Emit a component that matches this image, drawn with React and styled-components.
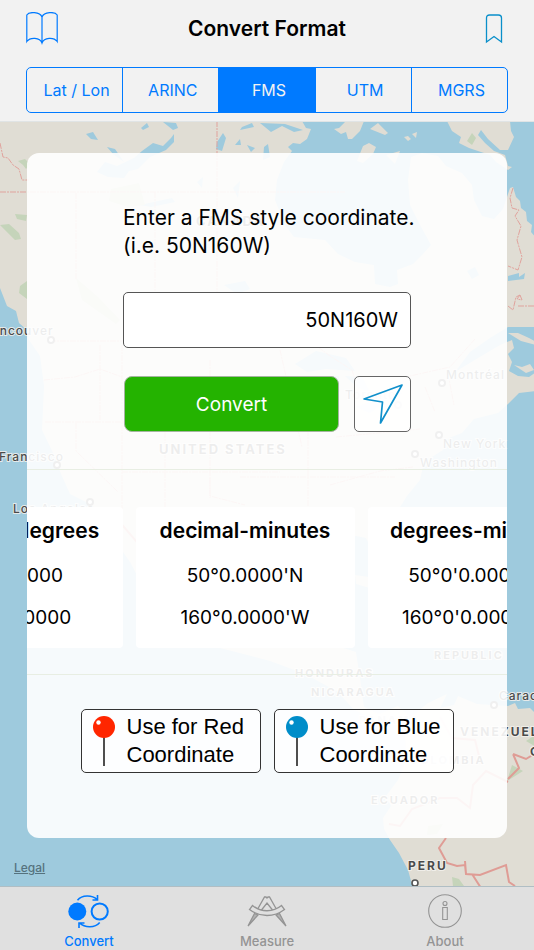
import React, { useState } from "react";
import styled, { createGlobalStyle } from "styled-components";

const SEGMENTS = ["Lat / Lon", "ARINC", "FMS", "UTM", "MGRS"];

const FORMATS = [
    { title: "decimal-degrees", lat: "50.000000", lon: "-160.000000" },
    { title: "decimal-minutes", lat: "50°0.0000'N", lon: "160°0.0000'W" },
    { title: "degrees-minutes", lat: "50°0'0.0000\"N", lon: "160°0'0.0000\"W" },
];

// map labels: big ones are countries, small ones are cities
const COUNTRIES = [
    { x: 196, y: 226, size: 13, name: "CANADA" },
    { x: 159, y: 454, size: 13, name: "UNITED STATES" },
    { x: 424, y: 647, size: 11, name: "DOMINICAN" },
    { x: 434, y: 659, size: 11, name: "REPUBLIC" },
    { x: 295, y: 677, size: 11, name: "HONDURAS" },
    { x: 311, y: 696, size: 11, name: "NICARAGUA" },
    { x: 359, y: 724, size: 11, name: "PANAMA" },
    { x: 460, y: 736, size: 12, name: "VENEZUELA" },
    { x: 410, y: 764, size: 11, name: "COLOMBIA" },
    { x: 371, y: 804, size: 11, name: "ECUADOR" },
    { x: 408, y: 870, size: 12, name: "PERU" },
    { x: 530, y: 756, size: 12, name: "GUYANA" },
];

const CITIES = [
    { x: -17, y: 335, name: "Vancouver", cx: 51, cy: 340 },
    { x: -30, y: 461, name: "San Francisco", cx: 57, cy: 465 },
    { x: 13, y: 513, name: "Los Angeles", cx: 90, cy: 502 },
    { x: 446, y: 379, name: "Montréal", cx: 442, cy: 383 },
    { x: 345, y: 399, name: "Toronto", cx: 398, cy: 405 },
    { x: 443, y: 448, name: "New York", cx: 439, cy: 435 },
    { x: 420, y: 467, name: "Washington", cx: 415, cy: 454 },
    { x: 499, y: 700, name: "Caracas", cx: 494, cy: 705 },
];

function MapBackground() {
    return (
        <MapSvg viewBox="0 122 534 764" preserveAspectRatio="xMidYMin slice" aria-hidden="true">
            <g fill="#e0ddd4">
                {/* north and central america */}
                <path d="M0 121H302L306 128 311 129 307 139 300 144 293 143 288 147 292 151 284 162 277 180 275 200 285 225 294 237 325 240 338 254 355 262 374 265 375 284 390 287 398 284 397 270 413 264 422 255 431 245 420 225 410 205 408 180 411 157 422 153 438 156 446 166 462 173 472 185 474 200 482 216 494 219 503 209 508 194 510 188 513 187 516 197 520 201 521 208 526 212 527 221 532 225 531 232 536 238V327H508L490 338 470 352 455 372 478 358 500 345 512 340 514 348 508 354 512 362 509 371 518 376 529 377 536 372V391L519 393 508 404 498 413 474 419 462 433 449 438 443 450 424 462 420 480 407 496 397 512 390 530 384 562 377 560 366 538 346 534 320 538 285 545 265 560 263 590 270 616 285 628 303 616 322 602 352 600 349 622 328 643 356 652 361 685 364 707 379 714 398 706 410 717 400 724 380 722 354 710 338 692 305 674 270 661 220 648 180 628 150 600 130 562 118 545 106 520 88 503 70 494 61 474 54 455 42 430 44 386 40 356 29 340 27 330 19 323 16 311 7 306 0 288Z" />
                {/* south america */}
                <path d="M405 736L412 716 428 703 447 694 440 708 454 705 458 696 477 704 508 706 515 703 518 709 530 708 536 714V888H413L408 870 399 853 390 840 384 829 383 818 391 806 386 796 398 780 406 760Z" />
                {/* northern islands */}
                <path d="M346 121L339 128 334 129 341 134 346 132 348 139 352 139 360 131 364 121ZM370 129L378 123 388 133 385 135ZM404 137L408 136 411 139 408 141ZM412 134L417 132 416 138ZM363 146L369 143 376 147 373 154 363 163 357 161ZM386 155L400 151 395 164Z" />
                <path d="M447 121H510L511 131 514 137 508 150 500 150 488 139 481 130 478 135 485 143 494 151 505 155 508 166 512 167 508 170 496 162 490 155 469 148 459 143 461 137 452 131Z" />
                <path d="M508 333L518 333 529 338 536 342V345L521 341ZM514 365L522 367 530 364 534 370 526 373Z" />
                <path d="M355 575L389 580 411 598 390 594 356 584ZM435 620L466 622 477 635 451 638 435 632Z" />
            </g>
            <g fill="#9ecadd">
                <path d="M86 134L93 132 98 140 91 139ZM107 147L115 149 124 162 113 154ZM142 151L153 143 163 146 171 138 174 134 174 142 166 150 150 157 138 169 129 171 124 178 108 177 97 172 105 162 117 166 134 158ZM141 128L147 123 149 127 143 130ZM163 122L176 123 178 128 173 130ZM217 142L223 133 226 138 222 151 216 149ZM235 145L240 139 241 145ZM242 127L252 123 254 127 240 130ZM247 145L255 148 251 152ZM264 147L268 144 270 157 263 160ZM260 123L285 124 303 130 294 132 282 126 271 132Z" />
                <path d="M140 205L172 198 175 202 151 207ZM197 182L203 177 202 188ZM233 188L240 181 238 198ZM224 285L245 281 250 289 237 294ZM467 271L475 267 479 275 472 279Z" />
                <path d="M508 276L519 273 519 277 525 273 524 279 508 281Z" />
                <path d="M295 364L316 351 346 358 355 371 326 369 307 372ZM328 376L339 376 340 391 329 403ZM345 376L362 377 370 392 358 388ZM356 407L379 399 385 395 397 391 402 393 384 402 370 413Z" />
                <path d="M525 728L530 726 528 733Z" />
            </g>
            <g fill="#c5d4ba">
                <path d="M18 161L25 159 30 164 26 169 23 165ZM15 214L27 215 26 221 17 219ZM0 225L9 224 19 233 21 239 15 240ZM20 286L27 281 27 299 19 293ZM111 189L139 183 145 205 128 207 109 201ZM76 278L98 297 120 320 116 324 82 300ZM472 133L476 138 472 145 467 141Z" />
                <path d="M512 765L523 771 507 781ZM428 826L443 824 437 834 427 835ZM452 877L459 879 464 886H453Z" />
                <path d="M535 735L526 741 536 747Z" />
            </g>
            <g fill="none" stroke="#e0a39d" strokeWidth="1" strokeDasharray="6 1 2 1">
                <path d="M0 143L3 157 8 158 13 165 19 169 22 180 29 180M0 192H345M217 121V335M76 193V280M155 192V300" />
                <path d="M513 188L510 198 512 208 519 210 515 216 521 226 517 240 522 257 518 270 508 266M508 306L513 310 516 297 520 295M518 306H534M520 295L522 300 517 299Z" />
                <path d="M50 341H310L330 356 352 370 361 399 384 396 410 376 450 367 475 339" />
                <path d="M44 380L75 377 100 369 122 377M45 422H240M100 345V420M76 423V451L118 492M122 345V524M165 382V520M122 472H280M210 478V496L245 505M210 360V498M280 350L302 447M308 420V521M336 437L420 429M330 485L380 471 413 467M240 477H395M425 387L435 412M448 374L454 405" />
            </g>
            <g fill="none" stroke="#df9c95" strokeWidth="2">
                <path d="M513 754L526 759 534 754M513 754L519 768 508 779M446 838L439 848 447 863 457 866 465 865 466 874 480 875 506 865 509 882 515 886M472 874L481 888M466 874L465 861" />
                <path d="M389 824L400 826 412 809 440 798 457 798 470 808 473 785 486 771 508 782M440 717L452 738 475 740 481 764M90 506L118 520 142 548 160 548 195 575" />
            </g>
            {COUNTRIES.map((c) => (
                <CountryLabel key={c.name} x={c.x} y={c.y} $size={c.size}>{c.name}</CountryLabel>
            ))}
            {CITIES.map((c) => (
                <g key={c.name}>
                    <CityLabel x={c.x} y={c.y}>{c.name}</CityLabel>
                    <circle cx={c.cx} cy={c.cy} r="3" fill="#fff" stroke="#666" strokeWidth="2" />
                </g>
            ))}
            <circle cx="415" cy="883" r="3" fill="#fff" stroke="#555" strokeWidth="1.6" />
        </MapSvg>
    );
}

function Pin({ color }) {
    return (
        <svg width="24" height="52" viewBox="0 0 24 52" aria-hidden="true">
            <path d="M12 22V51" stroke="#222" strokeWidth="1.6" />
            <circle cx="12" cy="12" r="11" fill={color} />
            <circle cx="6.5" cy="7.5" r="2.2" fill="#fff" />
        </svg>
    );
}

function ConvertIcon() {
    return (
        <svg width="44" height="34" viewBox="0 0 44 34" fill="none" stroke="currentColor" strokeWidth="1.6" aria-hidden="true">
            <circle cx="10.3" cy="17.5" r="9" fill="currentColor" stroke="none" />
            <circle cx="32.7" cy="17.5" r="8.1" strokeWidth="2" />
            <path d="M10.5 6.2C15 0.8 25 0.8 30 5.5M30.5 1V6H25.5M32.7 28.5C28 34 18 34 12.5 29M12 34V29H17.5" />
        </svg>
    );
}

function MeasureIcon() {
    return (
        <svg width="44" height="34" viewBox="0 0 44 34" fill="none" stroke="currentColor" strokeWidth="1.3" aria-hidden="true">
            <path d="M7.5 11.5C16 18.5 28 18.5 36.5 11.5L39.5 15.5C29 23.5 15 23.5 4.5 15.5Z" />
            <path d="M13 14.5L19.5 3H21L22 4L23 3H24.5L31 14.5M16.5 16L22 9L27.5 16" />
            <path d="M9.5 19.5L3 32L13 21ZM34.5 19.5L41 32L31 21Z" fill="currentColor" fillOpacity="0.6" />
        </svg>
    );
}

function AboutIcon() {
    return (
        <svg width="44" height="34" viewBox="0 0 44 34" fill="none" stroke="currentColor" strokeWidth="1.1" aria-hidden="true">
            <circle cx="22" cy="17" r="16.3" />
            <circle cx="22" cy="9.5" r="2" />
            <path d="M19.7 13.5H24.3V25.5H19.7Z" />
        </svg>
    );
}

const TABS = [
    { name: "Convert", Icon: ConvertIcon },
    { name: "Measure", Icon: MeasureIcon },
    { name: "About", Icon: AboutIcon },
];

function App() {
    const [segment, setSegment] = useState("FMS");
    const [tab, setTab] = useState("Convert");
    const [coordinate, setCoordinate] = useState("50N160W");

    return (
        <Page>
            <GlobalStyle />
            <Header>
                <TitleBar>
                    <IconButton aria-label="Guide" $color="#007aff">
                        <svg width="32" height="34" viewBox="0 0 32 34" fill="none" stroke="currentColor" strokeWidth="1.2">
                            <path d="M16 5V31M16 5C14 -0.5 3 -0.5 0.8 3V29.5C4 25 14 25 16 31C18 25 28 25 31.2 29.5V3C29 -0.5 18 -0.5 16 5Z" />
                        </svg>
                    </IconButton>
                    <Title>Convert Format</Title>
                    <IconButton aria-label="Bookmarks" $color="#0a8fca" $end>
                        <svg width="18" height="30" viewBox="0 0 18 30" fill="none" stroke="currentColor" strokeWidth="1.3">
                            <path d="M1.5 28V4Q1.5 1 4.5 1H13.5Q16.5 1 16.500 4V28L9 22.500Z" />
                        </svg>
                    </IconButton>
                </TitleBar>
                <Segmented>
                    {SEGMENTS.map((name) => (
                        <Segment
                            key={name}
                            $active={name === segment}
                            aria-pressed={name === segment}
                            onClick={() => setSegment(name)}
                        >
                            {name}
                        </Segment>
                    ))}
                </Segmented>
            </Header>
            <MapArea>
                <MapBackground />
                <Content>
                    <Card>
                        <Form onSubmit={(e) => e.preventDefault()}>
                            <Hint htmlFor="coordinate">
                                Enter a FMS style coordinate.
                                <br />
                                (i.e. 50N160W)
                            </Hint>
                            <CoordinateInput
                                id="coordinate"
                                type="text"
                                value={coordinate}
                                onChange={(e) => setCoordinate(e.target.value)}
                            />
                            <Actions>
                                <ConvertBtn type="submit">Convert</ConvertBtn>
                                <LocateBtn type="button" aria-label="Use current location">
                                    <svg width="42" height="42" viewBox="0 0 42 42" fill="none" stroke="#1190cb" strokeWidth="1.7" strokeLinejoin="round">
                                        <path d="M40 2L2 16L20.5 19L18.5 40Z" />
                                    </svg>
                                </LocateBtn>
                            </Actions>
                        </Form>
                        <Results>
                            {FORMATS.map((f) => (
                                <Result key={f.title}>
                                    <ResultTitle>{f.title}</ResultTitle>
                                    <ResultValue>{f.lat}</ResultValue>
                                    <ResultValue>{f.lon}</ResultValue>
                                </Result>
                            ))}
                        </Results>
                        <PinRow>
                            <PinBtn>
                                <Pin color="#ff2600" />
                                <span>Use for Red Coordinate</span>
                            </PinBtn>
                            <PinBtn>
                                <Pin color="#008dc9" />
                                <span>Use for Blue Coordinate</span>
                            </PinBtn>
                        </PinRow>
                    </Card>
                    <Legal href="#legal">Legal</Legal>
                </Content>
            </MapArea>
            <TabBar>
                {TABS.map(({ name, Icon }) => (
                    <Tab key={name} $active={name === tab} onClick={() => setTab(name)}>
                        <Icon />
                        {name}
                    </Tab>
                ))}
            </TabBar>
        </Page>
    );
}

const GlobalStyle = createGlobalStyle`
    * {
        box-sizing: border-box;
    }
    body {
        margin: 0;
        font-family: Inter, "Liberation Sans", sans-serif;
        color: #000;
    }
    button, input {
        font-family: inherit;
        margin: 0;
    }
    button {
        cursor: pointer;
    }
    svg {
        display: block;
        flex-shrink: 0;
    }
`;
const Page = styled.div`
    display: flex;
    flex-direction: column;
    min-height: 100vh;
`;
const Header = styled.header`
    padding: 0 26px 8px;
    background-color: #f2f2f2;
    border-bottom: 1px solid #e0e4e5;
`;
const TitleBar = styled.div`
    display: grid;
    grid-template-columns: 40px 1fr 40px;
    align-items: center;
    height: 57px;
    margin-bottom: 10px;
`;
const Title = styled.h1`
    margin: 0;
    font-size: 21px;
    font-weight: 600;
    text-align: center;
`;
const IconButton = styled.button`
    display: flex;
    justify-content: ${(p) => (p.$end ? "flex-end" : "flex-start")};
    padding: ${(p) => (p.$end ? "0 5px 0 0" : "0")};
    border: none;
    background: none;
    color: ${(p) => p.$color};
`;
const Segmented = styled.div`
    display: flex;
    height: 46px;
    border: 1px solid #007aff;
    border-radius: 5px;
    overflow: hidden;
`;
const Segment = styled.button`
    flex: 1;
    padding: 0 0 0 4px;
    border: none;
    background-color: ${(p) => (p.$active ? "#007aff" : "transparent")};
    color: ${(p) => (p.$active ? "#f2f2f2" : "#007aff")};
    font-size: 16px;
    & + & {
        border-left: 1px solid #007aff;
    }
`;
const MapArea = styled.main`
    flex: 1;
    display: grid;
    grid-template-columns: minmax(0, 1fr);
    position: relative;
    overflow: hidden;
    background-color: #9ecadd;
`;
const MapSvg = styled.svg`
    position: absolute;
    inset: 0;
    width: 100%;
    height: 100%;
`;
const CountryLabel = styled.text`
    font-size: ${(p) => p.$size}px;
    font-weight: 700;
    letter-spacing: 2px;
    fill: #4a4a4a;
    paint-order: stroke;
    stroke: #f0eee9;
    stroke-width: 2px;
`;
const CityLabel = styled.text`
    font-size: 12px;
    font-weight: 500;
    letter-spacing: 1px;
    fill: #4a4a4a;
    paint-order: stroke;
    stroke: #e6eaea;
    stroke-width: 2px;
`;
const Content = styled.div`
    position: relative;
    display: flex;
    flex-direction: column;
    padding: 31px 27px 0;
`;
const Card = styled.section`
    display: flex;
    flex-direction: column;
    padding: 51px 0 65px;
    border-radius: 12px;
    background-color: rgba(255, 255, 255, 0.9);
    overflow: hidden;
`;
const Form = styled.form`
    display: flex;
    flex-direction: column;
    width: 288px;
    margin: 0 auto 37px;
`;
const Hint = styled.label`
    margin-bottom: 32px;
    font-size: 21px;
    line-height: 28px;
    white-space: nowrap;
`;
const CoordinateInput = styled.input`
    width: 100%;
    height: 56px;
    margin-bottom: 28px;
    padding: 0 12px;
    border: 1px solid #555;
    border-radius: 5px;
    background-color: #fff;
    color: #000;
    font-size: 20px;
    text-align: right;
`;
const Actions = styled.div`
    display: flex;
    gap: 15px;
    padding-left: 1px;
`;
const ConvertBtn = styled.button`
    flex: 1;
    height: 56px;
    border: 1px solid #a5b5a0;
    border-radius: 8px;
    background-color: #24b300;
    color: #fff;
    font-size: 19px;
`;
const LocateBtn = styled.button`
    display: flex;
    align-items: center;
    justify-content: center;
    width: 57px;
    height: 56px;
    padding: 0;
    border: 1px solid #666;
    border-radius: 5px;
    background-color: rgba(255, 255, 255, 0.8);
`;
const Results = styled.div`
    display: flex;
    justify-content: center;
    gap: 13px;
    padding: 37px 44px 26px 0;
    border: 1px solid #e8eee3;
    border-width: 1px 0;
    overflow: hidden;
`;
const Result = styled.article`
    flex: 0 0 219px;
    height: 141px;
    padding-top: 10px;
    border-radius: 4px;
    background-color: #fff;
    text-align: center;
`;
const ResultTitle = styled.h2`
    margin: 0 0 10px;
    font-size: 21px;
    line-height: 28px;
    font-weight: 600;
`;
const ResultValue = styled.p`
    margin: 0;
    font-size: 19px;
    line-height: 42px;
`;
const PinRow = styled.div`
    display: flex;
    justify-content: center;
    gap: 13px;
    padding-top: 34px;
`;
const PinBtn = styled.button`
    display: flex;
    align-items: center;
    gap: 11px;
    width: 180px;
    height: 64px;
    padding: 0 10px;
    border: 1px solid #333;
    border-radius: 5px;
    background-color: rgba(255, 255, 255, 0.8);
    color: #000;
    font-family: "Liberation Sans", sans-serif;
    font-size: 22px;
    line-height: 28px;
    text-align: left;
`;
const Legal = styled.a`
    align-self: flex-start;
    margin: 22px 0 10px -13px;
    color: #55727e;
    font-size: 12px;
    font-weight: 500;
    line-height: 16px;
`;
const TabBar = styled.nav`
    display: grid;
    grid-template-columns: repeat(3, 1fr);
    height: 64px;
    border-top: 1px solid #b0bec4;
    background-color: #e0e0e0;
`;
const Tab = styled.button`
    display: flex;
    flex-direction: column;
    align-items: center;
    gap: 5px;
    padding: 7px 0 0;
    border: none;
    background: none;
    color: ${(p) => (p.$active ? "#007aff" : "#949494")};
    font-size: 13px;
    line-height: 16px;
    font-weight: 500;
`;

export default App;
